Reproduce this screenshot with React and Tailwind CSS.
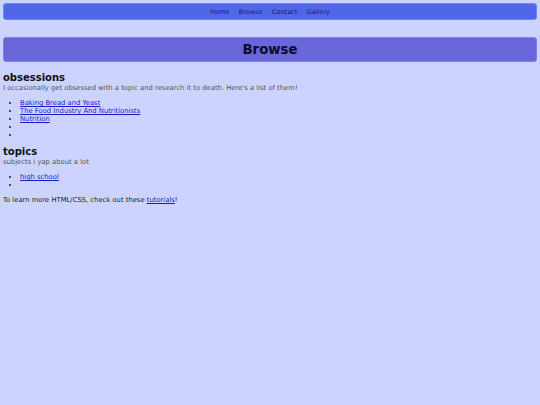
import React from "react"

const obsessions = [
	"Baking Bread and Yeast",
	"The Food Industry And Nutritionists",
	"Nutrition",
	"",
	"",
]

const topics = ["high school", ""]

const LinkList = ({ items }) => (
	<ul className="mt-[7px] pl-[17px] list-disc marker:text-[#222]">
		{items.map((each, i) => (
			<li key={i} className="h-[8px] leading-[8px]">
				{each && <a className="text-[#1a1ad6] underline" href="#">{each}</a>}
			</li>
		))}
	</ul>
)

const App = () => {
	return (
		<div className="min-h-screen bg-[#cdd3ff] px-[3px] pt-[3px] font-['DejaVu_Sans',sans-serif] text-[6.8px] leading-[8px] text-[#222]">
			<nav className="h-[16.5px] pt-[2px] rounded-[3px] border border-[#7086f0] bg-[#4f67e8] flex items-center justify-center gap-[9.5px] text-[6.5px] text-[#1c1c6a]">
				<a href="#">Home</a>
				<a href="#">Browse</a>
				<a href="#">Contact</a>
				<a href="#">Gallery</a>
			</nav>

			<header className="mt-[17.5px] h-[25px] rounded-[3px] border border-[#8080ea] bg-[#6767d9] flex items-center justify-center">
				<h1 className="font-bold text-[13.3px] leading-[16px] text-[#0b0b2a]">Browse</h1>
			</header>

			<section className="mt-[10px]">
				<h2 className="font-bold text-[10px] leading-[12px] text-[#111]">obsessions</h2>
				<p className="text-[#555]">I occasionally get obsessed with a topic and research it to death. Here's a list of them!</p>
				<LinkList items={obsessions} />
			</section>

			<section className="mt-[7px]">
				<h2 className="font-bold text-[10px] leading-[12px] text-[#111]">topics</h2>
				<p className="text-[#555]">subjects i yap about a lot</p>
				<LinkList items={topics} />
			</section>

			<p className="mt-[7px]">
				To learn more HTML/CSS, check out these <a className="text-[#1a1ad6] underline" href="#">tutorials</a>!
			</p>
		</div>
	)
}

export default App
